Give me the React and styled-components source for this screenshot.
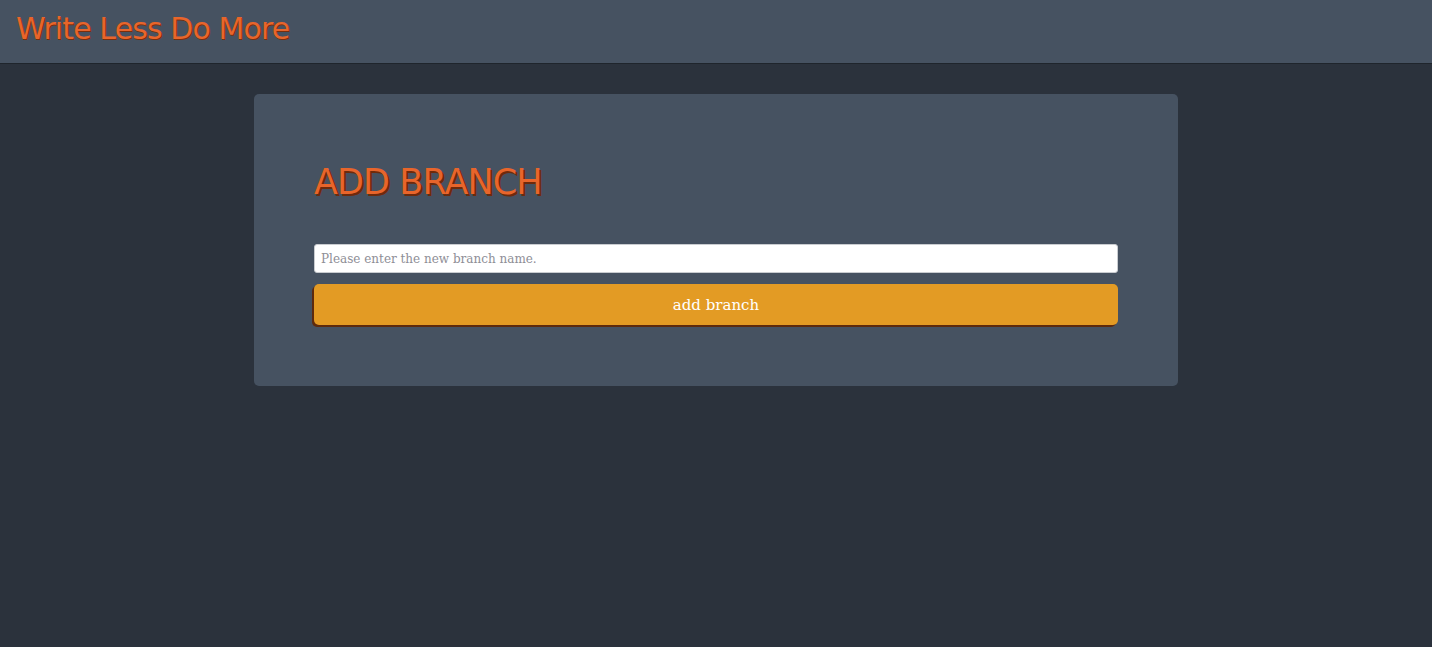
import React from "react";
import styled, { createGlobalStyle } from "styled-components";

const Global = createGlobalStyle`
  html, body { margin: 0; padding: 0; background: #2b323c; }
  body { font-family: "Liberation Sans", Arial, sans-serif; }
`;

const Page = styled.div`
  min-height: 647px;
  background: #2b323c;
`;

const Header = styled.header`
  height: 64px;
  background: #465261;
  border-bottom: 1px solid #1f252c;
  display: flex;
  align-items: center;
  padding: 0 16px;
  box-sizing: border-box;
`;

const Brand = styled.h1`
  margin: 0;
  margin-top: -6px;
  font-family: "DejaVu Sans", sans-serif;
  font-weight: normal;
  font-size: 30px;
  letter-spacing: -0.9px;
  color: #e8652b;
  text-shadow: 1px 1px 0 #7a2e0c;
`;

const Main = styled.main`
  display: flex;
  justify-content: center;
  padding-top: 30px;
`;

const Card = styled.section`
  width: 924px;
  box-sizing: border-box;
  background: #465261;
  border-radius: 5px;
  padding: 68px 60px 61px;
`;

const Title = styled.h2`
  margin: 0 0 42px;
  font-family: "DejaVu Sans", sans-serif;
  font-weight: normal;
  font-size: 35px;
  letter-spacing: -0.9px;
  line-height: 40px;
  color: #e8652b;
  text-shadow: 2px 2px 0 #6e2a0b;
`;

const Form = styled.form`
  display: flex;
  flex-direction: column;
  gap: 11px;
`;

const Input = styled.input`
  height: 29px;
  box-sizing: border-box;
  border: 1px solid #c9ccd0;
  border-radius: 3px;
  padding: 0 6px;
  font-family: "DejaVu Serif", serif;
  font-size: 12px;
  background: #fff;
  &::placeholder { color: #8e8e96; }
`;

const Button = styled.button`
  height: 41px;
  border: none;
  border-radius: 5px;
  background: #e39b24;
  color: #fff;
  font-family: "DejaVu Serif", serif;
  font-size: 15px;
  box-shadow: -2px 2px 0 #5e2a0c;
  cursor: pointer;
`;

export default function App() {
  return (
    <Page>
      <Global />
      <Header>
        <Brand>Write Less Do More</Brand>
      </Header>
      <Main>
        <Card>
          <Title>ADD BRANCH</Title>
          <Form onSubmit={(e) => e.preventDefault()}>
            <Input placeholder="Please enter the new branch name." />
            <Button type="submit">add branch</Button>
          </Form>
        </Card>
      </Main>
    </Page>
  );
}
